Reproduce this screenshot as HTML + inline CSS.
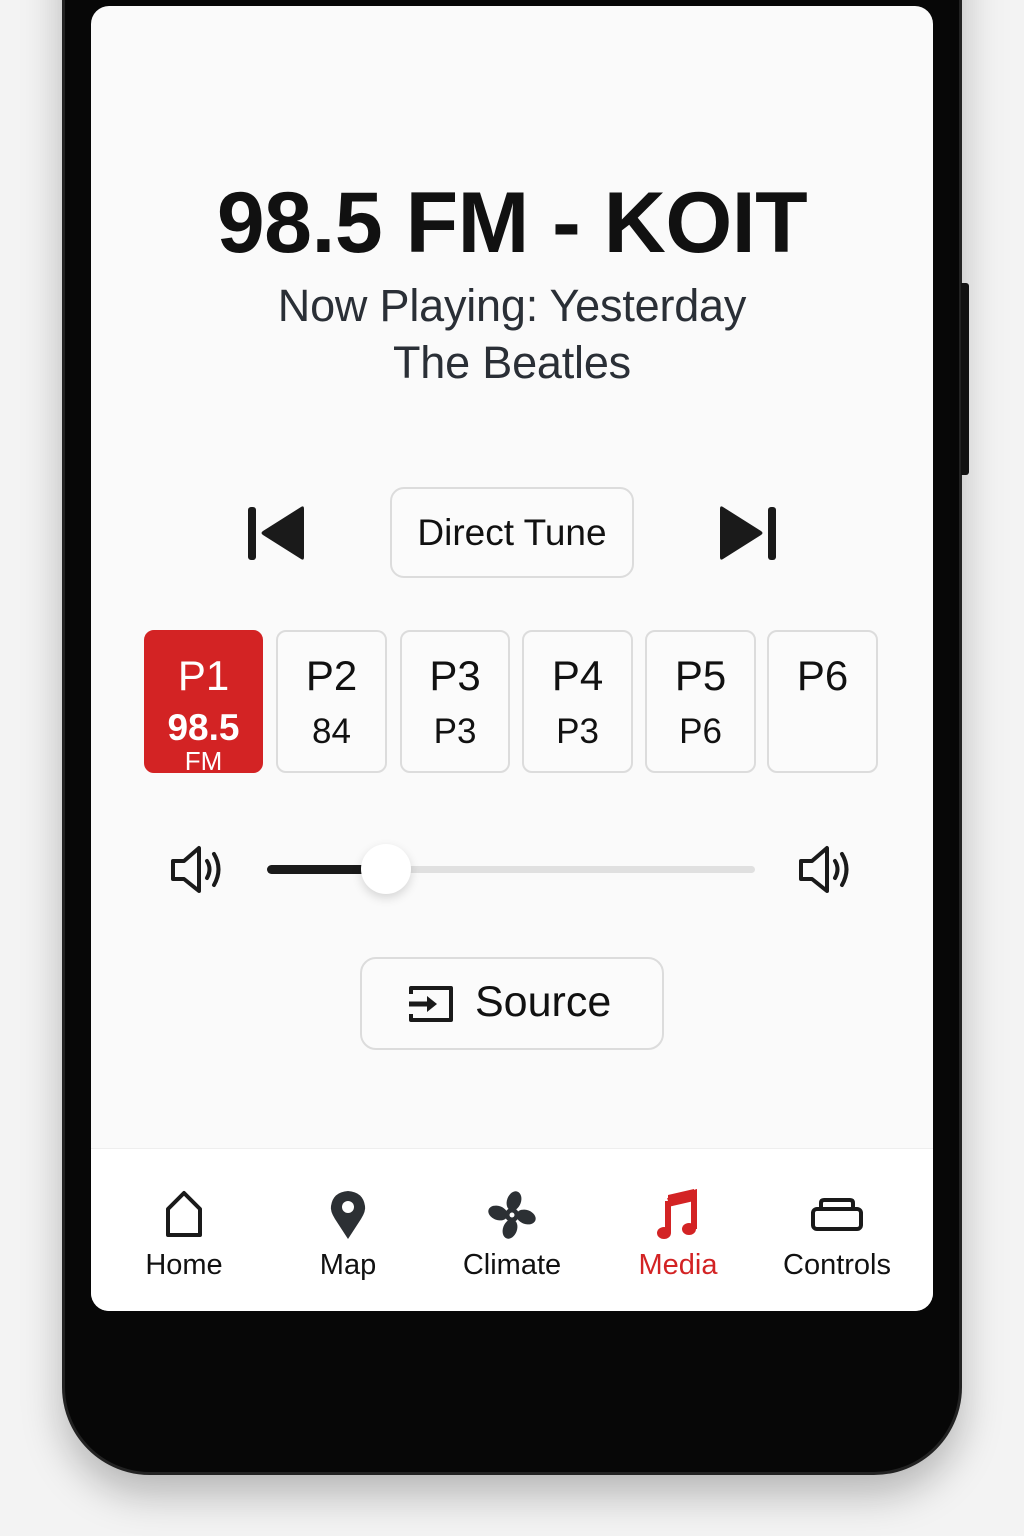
<!DOCTYPE html>
<html><head><meta charset="utf-8"><style>
*{margin:0;padding:0;box-sizing:border-box}
body{width:1024px;height:1536px;background:#f3f3f3;position:relative;overflow:hidden;font-family:"Liberation Sans",sans-serif}
.phone{position:absolute;left:62px;top:-100px;width:900px;height:1575px;background:#070707;border-radius:0 0 88px 88px;box-shadow:0 20px 40px rgba(0,0,0,.25);border:3px solid #222}
.btn-side{position:absolute;left:961px;top:283px;width:8px;height:192px;background:#111;border-radius:0 3px 3px 0}
.screen{position:absolute;left:91px;top:6px;width:842px;height:1305px;background:#fafafa;border-radius:18px;overflow:hidden}
.abs{position:absolute}
.c{text-align:center;left:0;width:842px}
.title{top:168px;font-size:86px;font-weight:bold;color:#111;letter-spacing:-0.5px}
.sub{font-size:45px;color:#2a2f36;letter-spacing:-0.2px}
.box{position:absolute;border:2px solid #dcdcdc;border-radius:14px;background:#fbfbfb}
.pre{position:absolute;top:624px;height:143px;border:2px solid #dcdcdc;border-radius:10px;background:#fbfbfb;text-align:center;color:#111}
.pre .a{font-size:42px;margin-top:20px;line-height:48px}
.pre .b{font-size:35px;margin-top:12px;line-height:40px}
.nav{position:absolute;left:0;top:1142px;width:842px;height:163px;background:#fff;border-top:1px solid #eee}
.ni{position:absolute;top:40px;width:160px;margin-left:-80px;text-align:center;font-size:29px;color:#111}
.ni svg{display:block;margin:0 auto 8px;height:52px}
</style></head><body>
<div class="phone"></div><div class="btn-side"></div>
<div class="screen">
<div class="abs c title">98.5 FM - KOIT</div>
<div class="abs c sub" style="top:274px">Now Playing: Yesterday</div>
<div class="abs c sub" style="top:331px">The Beatles</div>

<svg class="abs" style="left:155px;top:500px" width="60" height="56" viewBox="0 0 60 56"><rect x="2" y="1" width="8" height="53" rx="3" fill="#1a1a1a"/><path d="M58 3 L58 51 Q58 55 55 53 L17 29 Q14 27 17 25 L55 1 Q58 -1 58 3Z" fill="#1a1a1a"/></svg>
<div class="box" style="left:299px;top:481px;width:244px;height:91px;font-size:37px;text-align:center;line-height:87px;color:#111">Direct Tune</div>
<svg class="abs" style="left:627px;top:500px" width="60" height="56" viewBox="0 0 60 56"><rect x="50" y="1" width="8" height="53" rx="3" fill="#1a1a1a"/><path d="M2 3 L2 51 Q2 55 5 53 L43 29 Q46 27 43 25 L5 1 Q2 -1 2 3Z" fill="#1a1a1a"/></svg>

<div class="pre" style="left:53px;width:119px;background:#d32324;border-color:#d32324;color:#fff;overflow:hidden"><div class="a">P1</div><div class="b" style="margin-top:8px;font-weight:bold;font-size:37px">98.5</div><div style="font-size:26px;line-height:26px">FM</div></div>
<div class="pre" style="left:185px;width:111px"><div class="a">P2</div><div class="b">84</div></div>
<div class="pre" style="left:309px;width:110px"><div class="a">P3</div><div class="b">P3</div></div>
<div class="pre" style="left:431px;width:111px"><div class="a">P4</div><div class="b">P3</div></div>
<div class="pre" style="left:554px;width:111px"><div class="a">P5</div><div class="b">P6</div></div>
<div class="pre" style="left:676px;width:111px"><div class="a">P6</div></div>

<svg class="abs" style="left:79px;top:838px" width="56" height="52" viewBox="0 0 56 52"><path d="M3 17 H14 L29 4 V47 L14 35 H3 Z" fill="none" stroke="#1a1a1a" stroke-width="4" stroke-linejoin="round"/><path d="M37 17 Q42 25 37 34" fill="none" stroke="#1a1a1a" stroke-width="4" stroke-linecap="round"/><path d="M44 10 Q53 25 44 41" fill="none" stroke="#1a1a1a" stroke-width="4" stroke-linecap="round"/></svg>
<div class="abs" style="left:176px;top:860px;width:488px;height:7px;background:#e0e0e0;border-radius:4px"></div>
<div class="abs" style="left:176px;top:859px;width:120px;height:9px;background:#1a1a1a;border-radius:5px"></div>
<div class="abs" style="left:270px;top:838px;width:50px;height:50px;background:#fff;border-radius:50%;box-shadow:0 4px 10px rgba(0,0,0,.15)"></div>
<svg class="abs" style="left:707px;top:838px" width="56" height="52" viewBox="0 0 56 52"><path d="M3 17 H14 L29 4 V47 L14 35 H3 Z" fill="none" stroke="#1a1a1a" stroke-width="4" stroke-linejoin="round"/><path d="M37 17 Q42 25 37 34" fill="none" stroke="#1a1a1a" stroke-width="4" stroke-linecap="round"/><path d="M44 10 Q53 25 44 41" fill="none" stroke="#1a1a1a" stroke-width="4" stroke-linecap="round"/></svg>

<div class="box" style="left:269px;top:951px;width:304px;height:93px;border-radius:16px"></div>
<svg class="abs" style="left:316px;top:978px" width="48" height="40" viewBox="0 0 48 40"><path d="M4 10 V4 H44 V36 H4 V30" fill="none" stroke="#1a1a1a" stroke-width="4" stroke-linejoin="round"/><path d="M2 20 H24" stroke="#1a1a1a" stroke-width="5"/><path d="M20 12 L30 20 L20 28Z" fill="#1a1a1a"/></svg>
<div class="abs" style="left:384px;top:972px;font-size:43px;color:#111">Source</div>

<div class="nav">
<div class="ni" style="left:93px"><svg viewBox="0 0 40 52" width="40"><path d="M4 20 L20 4 L36 20 V46 H4 Z" fill="none" stroke="#1a1a1a" stroke-width="4" stroke-linejoin="round"/></svg>Home</div>
<div class="ni" style="left:257px"><svg viewBox="0 0 40 52" width="40"><path d="M20 50 L7 30 Q2 22 3 17 Q5 3 20 2 Q35 3 37 17 Q38 22 33 30 Z" fill="#2c3034"/><circle cx="20" cy="18" r="6" fill="#fff"/></svg>Map</div>
<div class="ni" style="left:421px"><svg viewBox="0 0 52 52" width="52"><g fill="#2c3034"><ellipse cx="28" cy="12" rx="7" ry="10" transform="rotate(20 28 12)"/><ellipse cx="24" cy="40" rx="7" ry="10" transform="rotate(20 24 40)"/><ellipse cx="12" cy="24" rx="10" ry="7" transform="rotate(20 12 24)"/><ellipse cx="40" cy="28" rx="10" ry="7" transform="rotate(20 40 28)"/><circle cx="26" cy="26" r="7"/></g><circle cx="26" cy="26" r="2.5" fill="#fff"/></svg>Climate</div>
<div class="ni" style="left:587px;color:#d32324"><svg viewBox="0 0 44 52" width="44"><path d="M12 12 L38 4 V40" fill="none" stroke="#d32324" stroke-width="6"/><path d="M12 12 V44" stroke="#d32324" stroke-width="6"/><path d="M12 6 L38 0 V12 L12 18Z" fill="#d32324"/><ellipse cx="8" cy="44" rx="7" ry="6" fill="#d32324"/><ellipse cx="33" cy="40" rx="7" ry="6" fill="#d32324"/></svg>Media</div>
<div class="ni" style="left:746px"><svg viewBox="0 0 56 52" width="56"><rect x="4" y="20" width="48" height="20" rx="4" fill="none" stroke="#1a1a1a" stroke-width="4"/><path d="M12 20 V14 Q12 11 15 11 H41 Q44 11 44 14 V20" fill="none" stroke="#1a1a1a" stroke-width="4"/></svg>Controls</div>
</div>
</div>
</body></html>
